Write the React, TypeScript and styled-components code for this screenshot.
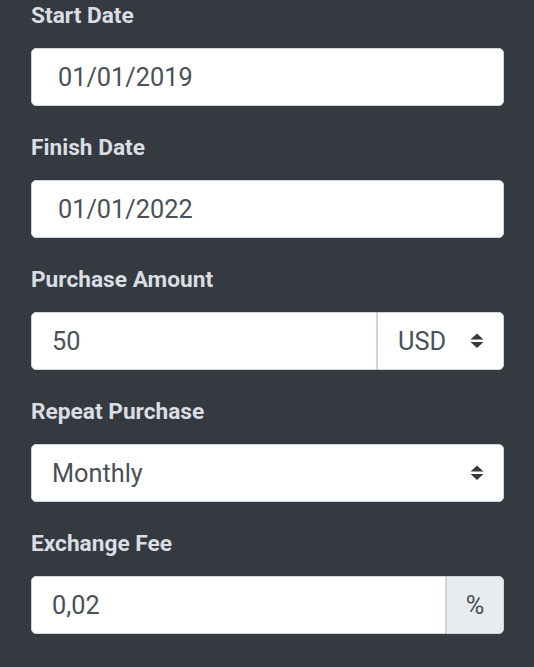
import React from "react";
import styled, { createGlobalStyle } from "styled-components";

const GlobalStyle = createGlobalStyle`
  html, body {
    margin: 0;
    background: #343a40;
  }
  body {
    font-family: Roboto, "Liberation Sans", sans-serif;
  }
`

const Page = styled.div`
  min-height: 667px;
  padding: 0 30px 0 31px;
  box-sizing: border-box;
  background: #343a40;
`

const Group = styled.div`
  margin-bottom: 26px;
`

const Label = styled.label`
  display: block;
  color: #dadde3;
  font-size: 22.7px;
  line-height: 32px;
  font-weight: 700;
  margin-bottom: 16px;
`

const Field = styled.div<{ $pad?: number }>`
  display: flex;
  align-items: center;
  height: 58px;
  box-sizing: border-box;
  background: #fff;
  border: 1px solid #ced4da;
  border-radius: 5px;
  padding-left: ${p => p.$pad ?? 20}px;
  color: #495057;
  font-size: 25.3px;
`

const Row = styled.div`
  display: flex;
  height: 58px;
`

const GroupInput = styled(Field)`
  flex: 1;
  border-radius: 5px 0 0 5px;
`

const SideSelect = styled(Field)<{ $w: number }>`
  width: ${p => p.$w}px;
  flex: none;
  border-radius: 0 5px 5px 0;
  border-left: 1px solid #ced4da;
  justify-content: space-between;
  padding-right: 19px;
`

const Addon = styled(Field)`
  width: 58px;
  flex: none;
  padding: 0;
  justify-content: center;
  background: #e9ecef;
  border-radius: 0 5px 5px 0;
  border-left: 1px solid #ced4da;
`

const SelectField = styled(Field)`
  justify-content: space-between;
  padding-right: 19px;
`

const Arrows = () => (
  <svg width="14" height="16" viewBox="0 0 14 16">
    <path d="M7 0.5 L13.5 6.5 L0.5 6.5 Z" fill="#343a40" />
    <path d="M0.5 9 L13.5 9 L7 15 Z" fill="#343a40" />
  </svg>
)

const App = () => {
  return (
    <Page>
      <GlobalStyle />
      <Group>
        <Label>Start Date</Label>
        <Field $pad={26}>01/01/2019</Field>
      </Group>
      <Group>
        <Label>Finish Date</Label>
        <Field $pad={26}>01/01/2022</Field>
      </Group>
      <Group>
        <Label>Purchase Amount</Label>
        <Row>
          <GroupInput>50</GroupInput>
          <SideSelect $w={127}>USD<Arrows /></SideSelect>
        </Row>
      </Group>
      <Group>
        <Label>Repeat Purchase</Label>
        <SelectField>Monthly<Arrows /></SelectField>
      </Group>
      <Group>
        <Label>Exchange Fee</Label>
        <Row>
          <GroupInput>0,02</GroupInput>
          <Addon>%</Addon>
        </Row>
      </Group>
    </Page>
  )
}

export default App
